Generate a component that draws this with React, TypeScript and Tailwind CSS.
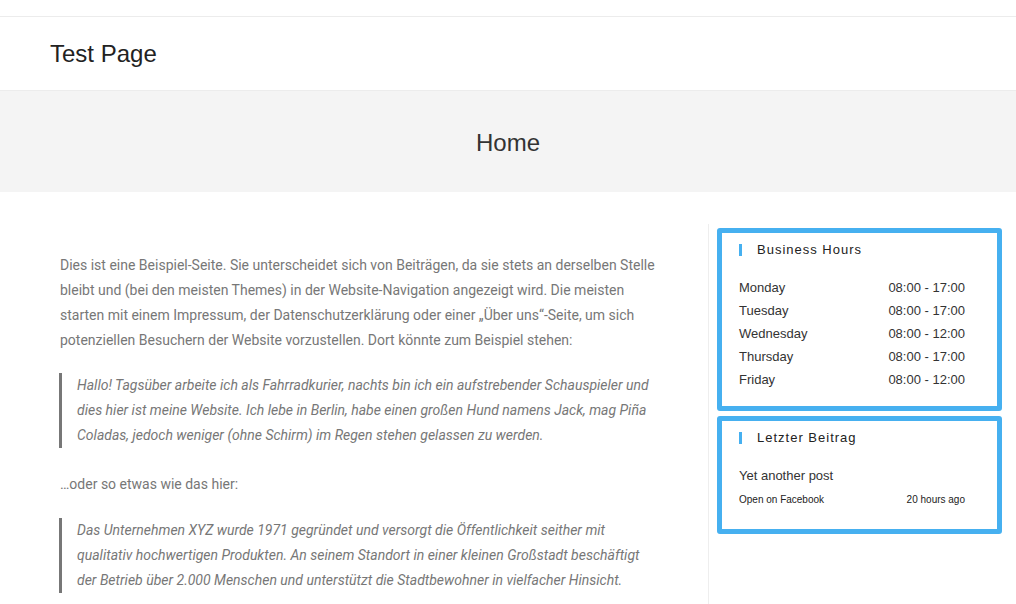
import React from "react";

const hours = [
  ["Monday", "08:00 - 17:00"],
  ["Tuesday", "08:00 - 17:00"],
  ["Wednesday", "08:00 - 12:00"],
  ["Thursday", "08:00 - 17:00"],
  ["Friday", "08:00 - 12:00"],
];

function WidgetTitle({ children }: { children: React.ReactNode }) {
  return (
    <div className="flex items-center h-[14px]">
      <span className="w-[3px] h-[12px] bg-[#46b0f0] mr-[15px]" />
      <span className="text-[13px] tracking-[1px] text-[#222] leading-[14px]">{children}</span>
    </div>
  );
}

export default function App() {
  return (
    <div className="w-[1016px] h-[604px] overflow-hidden bg-white" style={{ fontFamily: "'Liberation Sans', Arial, sans-serif" }}>
      <div className="h-[16px]" />
      <header className="h-[75px] border-t border-b border-[#ececec] flex items-center pl-[50px]">
        <span className="text-[24px] text-[#222] leading-none mt-[1px]">Test Page</span>
      </header>
      <div className="h-[101px] bg-[#f4f4f4] flex items-center justify-center">
        <h1 className="text-[24px] text-[#333] leading-none mt-[2px]">Home</h1>
      </div>
      <div className="flex">
        <main className="w-[708px] pl-[60px] pr-[48px] pt-[61px]" style={{ fontFamily: "Roboto, sans-serif" }}>
          <p className="text-[14px] leading-[25px] text-[#777] mb-[20px]">
            Dies ist eine Beispiel-Seite. Sie unterscheidet sich von Beiträgen, da sie stets an derselben Stelle bleibt und (bei den meisten Themes) in der Website-Navigation angezeigt wird. Die meisten starten mit einem Impressum, der Datenschutzerklärung oder einer „Über uns“-Seite, um sich potenziellen Besuchern der Website vorzustellen. Dort könnte zum Beispiel stehen:
          </p>
          <blockquote className="border-l-[3px] border-[#777] pl-[15px] ml-[-1px] mb-[24px]">
            <p className="text-[14px] leading-[25px] text-[#777] italic">
              Hallo! Tagsüber arbeite ich als Fahrradkurier, nachts bin ich ein aufstrebender Schauspieler und dies hier ist meine Website. Ich lebe in Berlin, habe einen großen Hund namens Jack, mag Piña Coladas, jedoch weniger (ohne Schirm) im Regen stehen gelassen zu werden.
            </p>
          </blockquote>
          <p className="text-[14px] leading-[25px] text-[#777] mb-[21px]">…oder so etwas wie das hier:</p>
          <blockquote className="border-l-[3px] border-[#777] pl-[15px] ml-[-1px]">
            <p className="text-[14px] leading-[25px] text-[#777] italic">
              Das Unternehmen XYZ wurde 1971 gegründet und versorgt die Öffentlichkeit seither mit qualitativ hochwertigen Produkten. An seinem Standort in einer kleinen Großstadt beschäftigt der Betrieb über 2.000 Menschen und unterstützt die Stadtbewohner in vielfacher Hinsicht.
            </p>
          </blockquote>
        </main>
        <aside className="w-[308px] border-l border-[#eeeeee] mt-[32px] pl-[8px] pt-[4px] h-[400px]">
          <section className="w-[285px] border-[5px] border-[#46b0f0] rounded-[3px] pl-[17px] pr-[32px] pt-[10px] pb-[15px]">
            <WidgetTitle>Business Hours</WidgetTitle>
            <div className="mt-[19px] text-[13px] text-[#333]">
              {hours.map(([d, t]) => (
                <div key={d} className="flex justify-between h-[23px] items-center">
                  <span>{d}</span>
                  <span>{t}</span>
                </div>
              ))}
            </div>
          </section>
          <section className="w-[285px] mt-[5px] border-[5px] border-[#46b0f0] rounded-[3px] pl-[17px] pr-[32px] pt-[10px] pb-[23px]">
            <WidgetTitle>Letzter Beitrag</WidgetTitle>
            <div className="mt-[23px] text-[13px] text-[#333] leading-[15px]">Yet another post</div>
            <div className="mt-[11px] flex justify-between text-[10px] text-[#222] leading-[12px]">
              <span>Open on Facebook</span>
              <span>20 hours ago</span>
            </div>
          </section>
        </aside>
      </div>
    </div>
  );
}
